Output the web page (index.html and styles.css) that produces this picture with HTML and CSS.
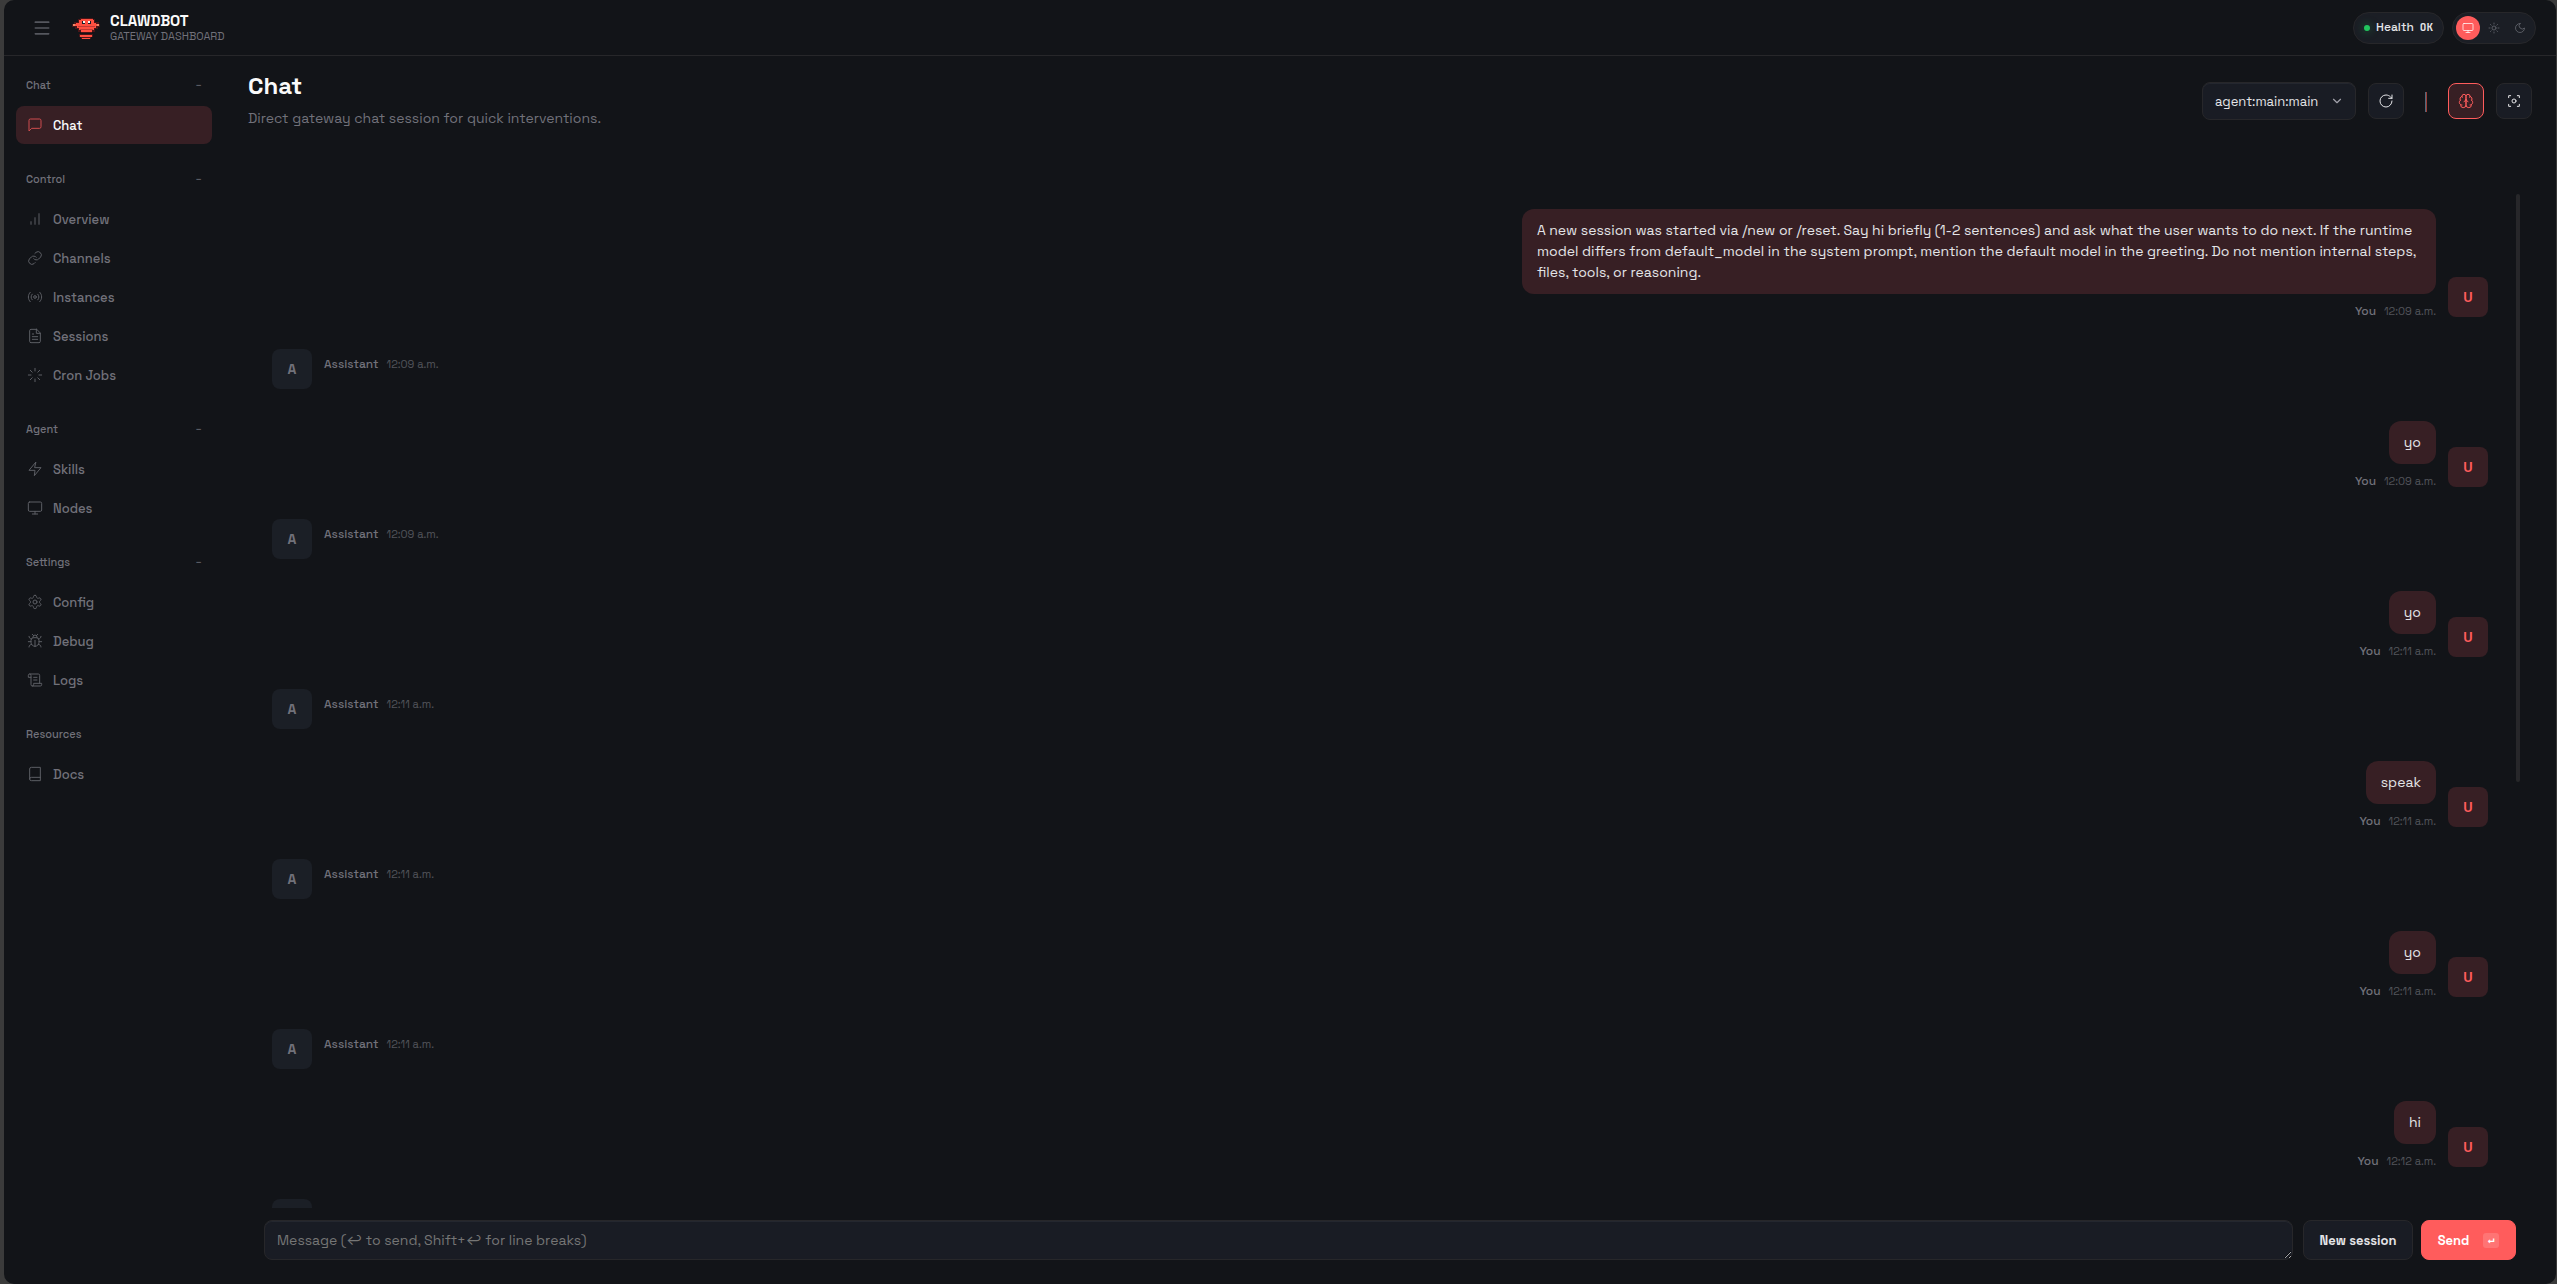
FILE: index.html
```
<!DOCTYPE html>
<html lang="en">
<head>
  <meta charset="UTF-8" />
  <meta name="viewport" content="width=device-width, initial-scale=1.0"/>
  <title>Clawdbot Control</title>
  <link rel="stylesheet" href="styles.css">
</head>
<body>
  <div class="shell">
    <header class="topbar">
      <div class="topbar-left">
        <button class="menu-btn" aria-label="Collapse sidebar">
          <svg viewBox="0 0 24 24"><path d="M4 5h16M4 12h16M4 19h16"/></svg>
        </button>
        <svg class="logo" viewBox="0 0 28 28" shape-rendering="crispEdges">
          <path fill="#4a1517" d="M8 4h13v1h2v3h4v2h1v3h-2v2h-3v3h-3v1H9v-1H6v-3H3v-2H0V10h2V8h4V5h2zM7 20h14v3h-2v2H9v-2H7z"/>
          <path fill="#ff4f40" d="M9 5h12v1h1v3h2v1h3v2h-3v2h-2v2h-2v2H9v-2H7v-2H5v-2H1v-2h3V9h3V6h2zM8 21h12v2H8zM10 24h8v1h-8z"/>
          <path fill="#c23a35" d="M6 12h17v1H6zM8 15h13v1H8z"/>
          <path fill="#e88a68" d="M1 10h2v2H1zM25 10h2v2h-2z"/>
          <path fill="#16202a" d="M10 7h3v3h-3zM16 7h3v3h-3z"/>
          <path fill="#f4f4f5" d="M11 7h2v2h-2zM16 7h2v2h-2z"/>
        </svg>
        <div class="brand">
          <div class="brand-title">CLAWDBOT</div>
          <div class="brand-sub">GATEWAY DASHBOARD</div>
        </div>
      </div>
      <div class="topbar-right">
        <div class="pill">
          <span class="status-dot"></span>
          <span>Health</span>
          <span class="mono">OK</span>
        </div>
        <div class="theme-toggle">
          <button class="active" aria-label="System theme">
            <svg viewBox="0 0 24 24"><rect x="2" y="3" width="20" height="14" rx="2"/><path d="M8 21h8M12 17v4"/></svg>
          </button>
          <button aria-label="Light theme">
            <svg viewBox="0 0 24 24"><circle cx="12" cy="12" r="4"/><path d="M12 2v2M12 20v2M4.9 4.9l1.4 1.4M17.7 17.7l1.4 1.4M2 12h2M20 12h2M6.3 17.7l-1.4 1.4M19.1 4.9l-1.4 1.4"/></svg>
          </button>
          <button aria-label="Dark theme">
            <svg viewBox="0 0 24 24"><path d="M12 3a6 6 0 0 0 9 9 9 9 0 1 1-9-9Z"/></svg>
          </button>
        </div>
      </div>
    </header>

    <nav class="nav">
      <section class="nav-group">
        <button class="nav-label"><span>Chat</span><span class="dash">−</span></button>
        <a class="nav-item active" href="#chat">
          <svg viewBox="0 0 24 24"><path d="M21 15a2 2 0 0 1-2 2H7l-4 4V5a2 2 0 0 1 2-2h14a2 2 0 0 1 2 2z"/></svg>
          Chat
        </a>
      </section>
      <section class="nav-group">
        <button class="nav-label"><span>Control</span><span class="dash">−</span></button>
        <a class="nav-item" href="#overview">
          <svg viewBox="0 0 24 24"><path d="M12 20V10M18 20V4M6 20v-4"/></svg>
          Overview
        </a>
        <a class="nav-item" href="#channels">
          <svg viewBox="0 0 24 24"><path d="M10 13a5 5 0 0 0 7.5.5l3-3a5 5 0 0 0-7-7l-1.7 1.7"/><path d="M14 11a5 5 0 0 0-7.5-.5l-3 3a5 5 0 0 0 7 7l1.7-1.7"/></svg>
          Channels
        </a>
        <a class="nav-item" href="#instances">
          <svg viewBox="0 0 24 24"><circle cx="12" cy="12" r="2"/><path d="M4.9 19.1C1 15.2 1 8.8 4.9 4.9M7.8 16.2c-2.3-2.3-2.3-6.1 0-8.5M16.2 7.8c2.3 2.3 2.3 6.1 0 8.5M19.1 4.9C23 8.8 23 15.1 19.1 19"/></svg>
          Instances
        </a>
        <a class="nav-item" href="#sessions">
          <svg viewBox="0 0 24 24"><path d="M14.5 2H6a2 2 0 0 0-2 2v16a2 2 0 0 0 2 2h12a2 2 0 0 0 2-2V7.5L14.5 2z"/><path d="M14 2v6h6M16 13H8M16 17H8M10 9H8"/></svg>
          Sessions
        </a>
        <a class="nav-item" href="#cron">
          <svg viewBox="0 0 24 24"><path d="M12 2v4M12 18v4M4.9 4.9l2.9 2.9M16.2 16.2l2.9 2.9M2 12h4M18 12h4M4.9 19.1l2.9-2.9M16.2 7.8l2.9-2.9"/></svg>
          Cron Jobs
        </a>
      </section>
      <section class="nav-group">
        <button class="nav-label"><span>Agent</span><span class="dash">−</span></button>
        <a class="nav-item" href="#skills">
          <svg viewBox="0 0 24 24"><path d="M13 2 3 14h9l-1 8 10-12h-9z"/></svg>
          Skills
        </a>
        <a class="nav-item" href="#nodes">
          <svg viewBox="0 0 24 24"><rect x="2" y="3" width="20" height="14" rx="2"/><path d="M8 21h8M12 17v4"/></svg>
          Nodes
        </a>
      </section>
      <section class="nav-group">
        <button class="nav-label"><span>Settings</span><span class="dash">−</span></button>
        <a class="nav-item" href="#config">
          <svg viewBox="0 0 24 24"><path d="M12.2 2h-.4a2 2 0 0 0-2 2v.2a2 2 0 0 1-1 1.7l-.4.3a2 2 0 0 1-2 0l-.2-.1a2 2 0 0 0-2.7.7l-.2.4a2 2 0 0 0 .7 2.7l.2.1a2 2 0 0 1 1 1.7v.5a2 2 0 0 1-1 1.8l-.2.1a2 2 0 0 0-.7 2.7l.2.4a2 2 0 0 0 2.7.7l.2-.1a2 2 0 0 1 2 0l.4.3a2 2 0 0 1 1 1.7v.2a2 2 0 0 0 2 2h.4a2 2 0 0 0 2-2v-.2a2 2 0 0 1 1-1.7l.4-.3a2 2 0 0 1 2 0l.2.1a2 2 0 0 0 2.7-.7l.2-.4a2 2 0 0 0-.7-2.7l-.2-.1a2 2 0 0 1-1-1.8v-.5a2 2 0 0 1 1-1.7l.2-.1a2 2 0 0 0 .7-2.7l-.2-.4a2 2 0 0 0-2.7-.7l-.2.1a2 2 0 0 1-2 0l-.4-.3a2 2 0 0 1-1-1.7V4a2 2 0 0 0-2-2z"/><circle cx="12" cy="12" r="3"/></svg>
          Config
        </a>
        <a class="nav-item" href="#debug">
          <svg viewBox="0 0 24 24"><path d="m8 2 1.9 1.9M14.1 3.9 16 2M9 7.1v-1a3 3 0 1 1 6 0v1"/><path d="M12 20c-3.3 0-6-2.7-6-6v-3a4 4 0 0 1 4-4h4a4 4 0 0 1 4 4v3c0 3.3-2.7 6-6 6M12 20v-9M6.5 9C4.6 8.8 3 7.1 3 5M6 13H2M3 21c0-2.1 1.7-3.9 3.8-4M21 5c0 2.1-1.6 3.8-3.5 4M22 13h-4M17.2 17c2.1.1 3.8 1.9 3.8 4"/></svg>
          Debug
        </a>
        <a class="nav-item" href="#logs">
          <svg viewBox="0 0 24 24"><path d="M8 21h12a2 2 0 0 0 2-2v-2H10v2a2 2 0 1 1-4 0V5a2 2 0 1 0-4 0v3h4"/><path d="M19 17V5a2 2 0 0 0-2-2H4M15 8h-5M15 12h-5"/></svg>
          Logs
        </a>
      </section>
      <section class="nav-group">
        <div class="nav-label"><span>Resources</span></div>
        <a class="nav-item" href="#docs">
          <svg viewBox="0 0 24 24"><path d="M4 19.5v-15A2.5 2.5 0 0 1 6.5 2H20v20H6.5a2.5 2.5 0 0 1 0-5H20"/></svg>
          Docs
        </a>
      </section>
    </nav>

    <main class="content">
      <div class="page-head">
        <div>
          <h1>Chat</h1>
          <p>Direct gateway chat session for quick interventions.</p>
        </div>
        <div class="controls">
          <div class="session-select">
            <select aria-label="Session">
              <option>agent:main:main</option>
            </select>
            <svg viewBox="0 0 24 24"><path d="m6 9 6 6 6-6"/></svg>
          </div>
          <button class="icon-btn" aria-label="Refresh">
            <svg viewBox="0 0 24 24"><path d="M21 12a9 9 0 1 1-9-9c2.5 0 4.9 1 6.7 2.7L21 8"/><path d="M21 3v5h-5"/></svg>
          </button>
          <span class="divider"></span>
          <button class="icon-btn active" aria-label="Toggle thinking">
            <svg viewBox="0 0 24 24"><path d="M12 5a3 3 0 1 0-5.997.125 4 4 0 0 0-2.526 5.77 4 4 0 0 0 .556 6.588A4 4 0 1 0 12 18Z"/><path d="M12 5a3 3 0 1 1 5.997.125 4 4 0 0 1 2.526 5.77 4 4 0 0 1-.556 6.588A4 4 0 1 1 12 18Z"/><path d="M15 13a4.5 4.5 0 0 1-3-4 4.5 4.5 0 0 1-3 4M17.599 6.5a3 3 0 0 0 .399-1.375M6.003 5.125A3 3 0 0 0 6.401 6.5M3.477 10.896a4 4 0 0 1 .585-.396M19.938 10.5a4 4 0 0 1 .585.396M6 18a4 4 0 0 1-1.967-.516M19.967 17.484A4 4 0 0 1 18 18"/></svg>
          </button>
          <button class="icon-btn" aria-label="Focus mode">
            <svg viewBox="0 0 24 24"><path d="M4 7V4h3M17 4h3v3M20 17v3h-3M7 20H4v-3"/><circle cx="12" cy="12" r="3"/></svg>
          </button>
        </div>
      </div>

      <div class="thread-wrap">
        <div class="thread">
          <div class="group user">
            <div class="messages">
              <div class="bubble">A new session was started via /new or /reset. Say hi briefly (1-2 sentences) and ask what the user wants to do next. If the runtime model differs from default_model in the system prompt, mention the default model in the greeting. Do not mention internal steps, files, tools, or reasoning.</div>
              <div class="meta"><span class="name">You</span><time>12:09 a.m.</time></div>
            </div>
            <div class="avatar">U</div>
          </div>
          <div class="group">
            <div class="avatar">A</div>
            <div class="meta"><span class="name">Assistant</span><time>12:09 a.m.</time></div>
          </div>
          <div class="group user">
            <div class="messages">
              <div class="bubble">yo</div>
              <div class="meta"><span class="name">You</span><time>12:09 a.m.</time></div>
            </div>
            <div class="avatar">U</div>
          </div>
          <div class="group">
            <div class="avatar">A</div>
            <div class="meta"><span class="name">Assistant</span><time>12:09 a.m.</time></div>
          </div>
          <div class="group user">
            <div class="messages">
              <div class="bubble">yo</div>
              <div class="meta"><span class="name">You</span><time>12:11 a.m.</time></div>
            </div>
            <div class="avatar">U</div>
          </div>
          <div class="group">
            <div class="avatar">A</div>
            <div class="meta"><span class="name">Assistant</span><time>12:11 a.m.</time></div>
          </div>
          <div class="group user">
            <div class="messages">
              <div class="bubble">speak</div>
              <div class="meta"><span class="name">You</span><time>12:11 a.m.</time></div>
            </div>
            <div class="avatar">U</div>
          </div>
          <div class="group">
            <div class="avatar">A</div>
            <div class="meta"><span class="name">Assistant</span><time>12:11 a.m.</time></div>
          </div>
          <div class="group user">
            <div class="messages">
              <div class="bubble">yo</div>
              <div class="meta"><span class="name">You</span><time>12:11 a.m.</time></div>
            </div>
            <div class="avatar">U</div>
          </div>
          <div class="group">
            <div class="avatar">A</div>
            <div class="meta"><span class="name">Assistant</span><time>12:11 a.m.</time></div>
          </div>
          <div class="group user">
            <div class="messages">
              <div class="bubble">hi</div>
              <div class="meta"><span class="name">You</span><time>12:12 a.m.</time></div>
            </div>
            <div class="avatar">U</div>
          </div>
          <div class="group">
            <div class="avatar">A</div>
            <div class="meta"><span class="name">Assistant</span><time>12:12 a.m.</time></div>
          </div>
        </div>
        <div class="scroll-thumb"></div>
      </div>

      <form class="compose">
        <textarea aria-label="Message" rows="1" placeholder="Message (↩ to send, Shift+↩ for line breaks)"></textarea>
        <button type="button" class="btn">New session</button>
        <button type="button" class="btn primary">Send <kbd>↵</kbd></button>
      </form>
    </main>
  </div>
</body>
</html>
```

FILE: styles.css
```
* {
  box-sizing: border-box;
}

body {
  margin: 0;
  background: #3b3b3b;
  color: #e4e4e7;
  font-family: "Space Grotesk", Inter, sans-serif;
  font-size: 14px;
  line-height: 21px;
}

button, select, textarea {
  font: inherit;
  color: inherit;
}

button {
  cursor: pointer;
}

svg {
  fill: none;
  stroke: currentColor;
  stroke-width: 1.5;
  stroke-linecap: round;
  stroke-linejoin: round;
}

.shell {
  display: grid;
  grid-template-columns: 220px 1fr;
  grid-template-rows: 56px 1fr;
  height: 100vh;
  margin: 0 1px 0 4px;
  background: #121418;
  border-radius: 10px;
  overflow: hidden;
}

/* top bar */
.topbar {
  grid-column: 1 / -1;
  display: flex;
  justify-content: space-between;
  align-items: center;
  padding: 0 20px;
  border-bottom: 1px solid #27272a;
}

.topbar-left, .topbar-right {
  display: flex;
  align-items: center;
}

.topbar-right {
  gap: 8px;
}

.menu-btn {
  display: flex;
  justify-content: center;
  align-items: center;
  width: 36px;
  height: 36px;
  padding: 0;
  border: none;
  background: none;
  color: #55575e;
}

.menu-btn svg {
  width: 20px;
  height: 20px;
  stroke-width: 2;
}

.logo {
  width: 28px;
  height: 28px;
  margin: 0 10px 0 12px;
  stroke: none;
}

.brand-title {
  font-size: 15px;
  font-weight: 700;
  line-height: 16px;
  color: #fafafa;
}

.brand-sub {
  font-size: 11px;
  line-height: 14px;
  color: #71717a;
}

.pill {
  display: flex;
  align-items: center;
  gap: 6px;
  height: 32px;
  padding: 0 10px;
  border: 1px solid #27272a;
  border-radius: 16px;
  background: #1b1e25;
  font-size: 12px;
  font-weight: 500;
}

.status-dot {
  width: 6px;
  height: 6px;
  border-radius: 50%;
  background: #22c55e;
  box-shadow: 0 0 8px rgba(34, 197, 94, 0.5);
}

.mono {
  font-family: "JetBrains Mono", "Liberation Mono", monospace;
  font-size: 11px;
  font-weight: 600;
}

.theme-toggle {
  display: flex;
  align-items: center;
  gap: 2px;
  height: 32px;
  padding: 0 3px;
  border: 1px solid #27272a;
  border-radius: 16px;
  background: #1b1e25;
}

.theme-toggle button {
  display: flex;
  justify-content: center;
  align-items: center;
  width: 24px;
  height: 24px;
  padding: 0;
  border: none;
  border-radius: 50%;
  background: none;
  color: #6b6d75;
}

.theme-toggle .active {
  background: #ff5c5c;
  color: #fff;
}

.theme-toggle svg {
  width: 12px;
  height: 12px;
}

/* sidebar */
.nav {
  display: flex;
  flex-direction: column;
  gap: 22px;
  padding: 16px 12px;
}

.nav-group {
  display: flex;
  flex-direction: column;
  gap: 1px;
}

.nav-label {
  display: flex;
  justify-content: space-between;
  align-items: center;
  height: 26px;
  margin-bottom: 7px;
  padding: 0 10px;
  border: none;
  background: none;
  font-size: 11px;
  font-weight: 500;
  color: #71717a;
}

.dash {
  color: #5c5e66;
  font-size: 11px;
}

.nav-item {
  display: flex;
  align-items: center;
  gap: 10px;
  height: 38px;
  padding: 0 11px;
  border-radius: 8px;
  font-size: 13px;
  font-weight: 500;
  color: #71717a;
  text-decoration: none;
}

.nav-item svg {
  width: 16px;
  height: 16px;
  color: #5c5e64;
}

.nav-item.active {
  background: #371f24;
  color: #fafafa;
}

.nav-item.active svg {
  color: #d04d4f;
}

/* page */
.content {
  display: flex;
  flex-direction: column;
  min-width: 0;
  min-height: 0;
  padding: 15px 24px 24px;
}

.page-head {
  display: flex;
  justify-content: space-between;
  align-items: center;
  padding-bottom: 63px;
}

h1 {
  margin: 0;
  font-size: 24px;
  font-weight: 700;
  line-height: 30px;
  color: #fafafa;
}

.page-head p {
  margin: 7px 0 2px;
  color: #71717a;
}

.controls {
  display: flex;
  align-items: center;
  gap: 12px;
}

.session-select {
  position: relative;
}

.session-select select {
  display: block;
  width: 154px;
  height: 38px;
  padding: 0 32px 0 12px;
  border: 1px solid #27272a;
  border-radius: 8px;
  background: #191c24;
  box-shadow: inset 0 1px 0 rgba(255, 255, 255, 0.05);
  font-size: 13px;
  appearance: none;
}

.session-select svg {
  position: absolute;
  top: 12px;
  right: 12px;
  width: 14px;
  height: 14px;
  stroke-width: 2;
  color: #a1a1aa;
  pointer-events: none;
}

.icon-btn {
  display: flex;
  justify-content: center;
  align-items: center;
  width: 36px;
  height: 36px;
  padding: 0;
  border: 1px solid #27272a;
  border-radius: 8px;
  background: #191c24;
}

.icon-btn svg {
  width: 16px;
  height: 16px;
}

.icon-btn.active {
  border-color: #ff5c5c;
  background: #371f24;
  color: #ff5c5c;
}

.divider {
  width: 2px;
  height: 20px;
  margin: 2px 9px 0;
  background: linear-gradient(to right, #50697c 50%, #9a3f38 50%);
}

/* chat */
.thread-wrap {
  position: relative;
  flex: 1;
  min-height: 0;
  margin: 0 12px 0 16px;
}

.thread {
  display: flex;
  flex-direction: column;
  gap: 28px;
  height: 100%;
  padding: 15px 32px 0 8px;
  overflow: hidden;
}

.scroll-thumb {
  position: absolute;
  top: 0;
  right: 0;
  width: 4px;
  height: 58%;
  border-radius: 2px;
  background: #27272a;
}

.group {
  display: flex;
  flex-shrink: 0;
  align-items: flex-start;
  gap: 12px;
}

.group.user {
  justify-content: flex-end;
  align-items: flex-end;
}

.messages {
  display: flex;
  flex-direction: column;
  align-items: flex-end;
  max-width: 914px;
}

.bubble {
  padding: 11px 15px;
  border-radius: 12px;
  background: #371f24;
}

.messages .meta {
  margin-top: 8px;
}

.meta {
  display: flex;
  align-items: center;
  gap: 8px;
  height: 19px;
  margin-top: 6px;
}

.name {
  font-size: 12px;
  font-weight: 500;
  color: #71717a;
}

.meta time {
  font-size: 11px;
  color: #52545b;
}

.avatar {
  flex-shrink: 0;
  width: 40px;
  height: 40px;
  margin-bottom: 4px;
  border-radius: 8px;
  background: #1b1f26;
  color: #71717a;
  font-weight: 600;
  line-height: 40px;
  text-align: center;
}

.user .avatar {
  background: #371f24;
  color: #ff5c5c;
}

.compose {
  display: flex;
  gap: 8px;
  margin: 12px 16px 0;
}

textarea {
  flex: 1;
  height: 40px;
  margin-right: 2px;
  padding: 9px 12px;
  border: 1px solid #27272a;
  border-radius: 8px;
  outline: none;
  background: #191c24;
  box-shadow: inset 0 1px 0 rgba(255, 255, 255, 0.05);
  resize: vertical;
}

textarea::placeholder {
  color: #757575;
}

.btn {
  display: flex;
  justify-content: center;
  align-items: center;
  gap: 14px;
  width: 110px;
  height: 40px;
  padding: 0;
  border: 1px solid #27272a;
  border-radius: 8px;
  background: #191c24;
  font-size: 13px;
  font-weight: 600;
}

.btn.primary {
  width: 95px;
  border-color: #ff5c5c;
  background: #ff5c5c;
  color: #fff;
}

kbd {
  width: 16px;
  border-radius: 3px;
  background: rgba(255, 255, 255, 0.15);
  font-family: "Liberation Mono", monospace;
  font-size: 11px;
  line-height: 15px;
  text-align: center;
}
```
